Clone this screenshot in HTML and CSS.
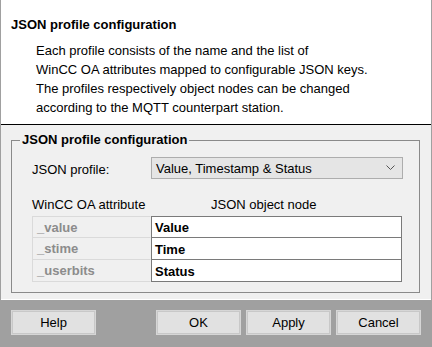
FILE: index.html
```html
<!DOCTYPE html>
<html lang="en">
<head>
    <meta charset="UTF-8">
    <title>JSON profile configuration</title>
    <link rel="stylesheet" href="styles.css">
</head>
<body>
    <div class="dialog">
        <div class="header">
            <h1>JSON profile configuration</h1>
            <p>Each profile consists of the name and the list of<br>
               WinCC OA attributes mapped to configurable JSON keys.<br>
               The profiles respectively object nodes can be changed<br>
               according to the MQTT counterpart station.</p>
        </div>

        <div class="content">
            <fieldset class="group">
                <legend>JSON profile configuration</legend>

                <div class="profile-row">
                    <label for="profile">JSON profile:</label>
                    <div class="combo" id="profile">
                        <span>Value, Timestamp &amp; Status</span>
                        <svg width="9" height="6" viewBox="0 0 9 6"><path d="M0.5 0.5 L4.5 4.5 L8.5 0.5" fill="none" stroke="#555" stroke-width="1"/></svg>
                    </div>
                </div>

                <div class="table-head">
                    <span class="col-attr">WinCC OA attribute</span>
                    <span class="col-node">JSON object node</span>
                </div>

                <div class="table">
                    <div class="attr">_value</div>
                    <div class="node">Value</div>
                    <div class="attr">_stime</div>
                    <div class="node">Time</div>
                    <div class="attr">_userbits</div>
                    <div class="node">Status</div>
                </div>
            </fieldset>
        </div>

        <div class="footer">
            <button class="btn">Help</button>
            <div class="spacer"></div>
            <button class="btn">OK</button>
            <button class="btn">Apply</button>
            <button class="btn">Cancel</button>
        </div>
    </div>
</body>
</html>
```

FILE: styles.css
```css
body {
    margin: 0;
    font-family: 'Liberation Sans', Arial, sans-serif;
    font-size: 13px;
    color: #000000;
    background: #ffffff;
}

.dialog {
    width: 430px;
    height: 347px;
    border-left: 1px solid #a0a0a0;
    border-right: 1px solid #a0a0a0;
    display: flex;
    flex-direction: column;
}

/* Header */
.header {
    height: 125px;
    box-sizing: border-box;
    background: #ffffff;
    border-bottom: 1px solid #000000;
    padding: 17px 0 0 10px;
}

.header h1 {
    margin: 0;
    font-size: 13px;
    font-weight: bold;
    line-height: 16px;
}

.header p {
    margin: 8px 0 0 25px;
    line-height: 19px;
}

/* Group box */
.content {
    height: 175px;
    box-sizing: border-box;
    background: #f0f0f0;
    padding: 7px 11px 0 10px;
    border-bottom: 1px solid #ffffff;
}

.group {
    margin: 0;
    height: 161px;
    box-sizing: border-box;
    border: 1px solid #8a8a8a;
    padding: 0 16px 0 20px;
    min-width: 0;
}

.group legend {
    font-size: 13px;
    font-weight: bold;
    padding: 0 2px;
    margin-left: -12px;
    line-height: 16px;
}

.profile-row {
    display: flex;
    align-items: center;
    margin-top: 9px;
    height: 22px;
}

.profile-row label {
    width: 119px;
    padding-top: 2px;
}

.combo {
    flex: 1;
    height: 22px;
    box-sizing: border-box;
    background: #e5e5e5;
    border: 1px solid #adadad;
    display: flex;
    align-items: center;
    justify-content: space-between;
    padding: 0 7px 0 4px;
}

.table-head {
    display: flex;
    margin-top: 18px;
    height: 16px;
    line-height: 16px;
}

.col-attr {
    width: 179px;
}

.table {
    display: grid;
    grid-template-columns: 119px 251px;
    grid-auto-rows: 22px;
    margin-top: 3px;
}

.attr,
.node {
    box-sizing: border-box;
    font-weight: bold;
    display: flex;
    align-items: center;
    padding-left: 3px;
}

.attr {
    color: #8c8c8c;
    border: 1px solid #dadada;
    border-right-color: #f0f0f0;
    margin-top: -1px;
    padding-left: 4px;
}

.attr:first-child {
    margin-top: 0;
}

.node {
    background: #ffffff;
    border: 1px solid #7a7a7a;
    border-top-width: 0;
    padding-top: 1px;
}

.node:nth-child(2) {
    border-top-width: 1px;
    padding-top: 0;
}

/* Footer */
.footer {
    flex: 1;
    background: #a0a0a0;
    display: flex;
    align-items: flex-start;
    padding: 10px 10px 0 10px;
    gap: 5px;
}

.spacer {
    width: 50px;
}

.btn {
    width: 85px;
    height: 25px;
    margin: 0;
    font-family: inherit;
    font-size: 13px;
    color: #000000;
    background: #e1e1e1;
    border: 1px solid #d6d6d6;
    outline: 1px solid #c8c8c8;
    outline-offset: -2px;
    padding: 0;
}
```
